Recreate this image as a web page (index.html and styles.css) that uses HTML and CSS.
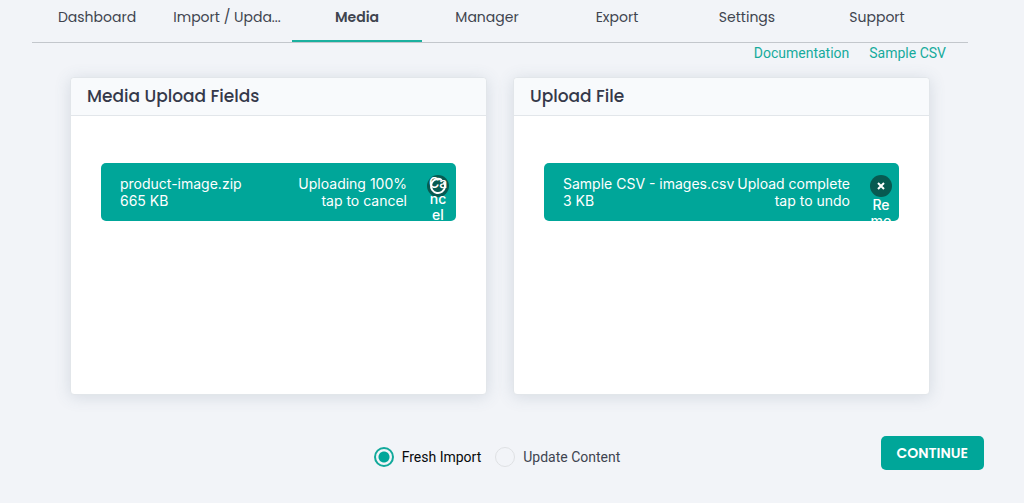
FILE: index.html
```html
<!DOCTYPE html>
<html lang="en">
<head>
<meta charset="utf-8">
<meta name="viewport" content="width=device-width, initial-scale=1">
<title>Media Upload</title>
<link rel="stylesheet" href="styles.css">
</head>
<body>
<nav class="tabs">
  <a class="tab" href="#dashboard">Dashboard</a>
  <a class="tab" href="#import">Import / Upda...</a>
  <a class="tab tab-active" href="#media" aria-current="page">Media</a>
  <a class="tab" href="#manager">Manager</a>
  <a class="tab" href="#export">Export</a>
  <a class="tab" href="#settings">Settings</a>
  <a class="tab" href="#support">Support</a>
</nav>
<div class="links">
  <a class="link" href="#docs">Documentation</a>
  <a class="link" href="#sample">Sample CSV</a>
</div>
<main class="cards">
  <section class="card">
    <h2 class="card-title">Media Upload Fields</h2>
    <div class="card-body">
      <div class="file">
        <div class="file-info"><span>product-image.zip</span><span>665 KB</span></div>
        <div class="file-status"><span>Uploading 100%</span><span>tap to cancel</span></div>
        <button class="file-action" type="button" aria-label="Cancel">
          <svg class="action-icon" viewBox="0 0 22 22" aria-hidden="true"><circle cx="11" cy="11" r="7" fill="none" stroke="#fff" stroke-width="2" stroke-dasharray="41 3" transform="rotate(-35 11 11)"/></svg>
          <span class="action-label action-label-over">Ca<br>nc<br>el</span>
        </button>
      </div>
    </div>
  </section>
  <section class="card">
    <h2 class="card-title">Upload File</h2>
    <div class="card-body">
      <div class="file">
        <div class="file-info"><span>Sample CSV - images.csv</span><span>3 KB</span></div>
        <div class="file-status"><span>Upload complete</span><span>tap to undo</span></div>
        <button class="file-action" type="button" aria-label="Remove">
          <svg class="action-icon" viewBox="0 0 22 22" aria-hidden="true"><path d="M8 8l6 6M14 8l-6 6" fill="none" stroke="#fff" stroke-width="2"/></svg>
          <span class="action-label action-label-below">Re<br>mo</span>
        </button>
      </div>
    </div>
  </section>
</main>
<footer class="footer">
  <div class="options">
    <label class="option option-checked"><input class="radio" type="radio" name="mode" checked>Fresh Import</label>
    <label class="option"><input class="radio" type="radio" name="mode">Update Content</label>
  </div>
  <button class="continue" type="button">CONTINUE</button>
</footer>
</body>
</html>
```
FILE: styles.css
```css
* {
  box-sizing: border-box;
}

body {
  margin: 0;
  background: #f2f4f8;
  color: #35394a;
  font-family: Roboto, sans-serif;
  font-size: 14px;
}

.tabs {
  display: grid;
  grid-template-columns: repeat(7, 1fr);
  margin: 0 56px 0 32px;
  padding-right: 26px;
  border-bottom: 1px solid #c3c7cc;
}

.tab {
  padding: 7px 0 12px;
  border-bottom: 2px solid transparent;
  color: #40444f;
  font-family: Poppins, Inter, sans-serif;
  line-height: 21px;
  text-align: center;
  text-decoration: none;
  white-space: nowrap;
}

.tab-active {
  border-color: #1bb09f;
  font-weight: 600;
}

.links {
  display: flex;
  justify-content: flex-end;
  gap: 20px;
  padding: 2px 78px 0 0;
}

.link {
  color: #16ab9c;
  line-height: 16px;
  text-decoration: none;
}

.cards {
  display: grid;
  grid-template-columns: 1fr 1fr;
  gap: 26px;
  padding: 16px 94px 0 70px;
}

.card {
  border: 1px solid #e2e6ea;
  border-radius: 4px;
  background: #fff;
  box-shadow: 0 2px 16px rgba(70, 95, 120, 0.17);
}

.card-title {
  margin: 0;
  padding: 6px 16px;
  border-bottom: 1px solid #e2e6ea;
  border-radius: 4px 4px 0 0;
  background: #f8fafc;
  font-family: Poppins, Inter, sans-serif;
  font-size: 17px;
  font-weight: 500;
  line-height: 25px;
}

.card-body {
  min-height: 278px;
  padding: 47px 30px;
}

.file {
  display: flex;
  align-items: flex-start;
  padding: 12px 7px 12px 19px;
  overflow: hidden;
  border-radius: 5px;
  background: #00a699;
  color: #fff;
  font-family: Inter, sans-serif;
  line-height: 17px;
  white-space: nowrap;
}

.file-info,
.file-status {
  display: flex;
  flex-direction: column;
}

.file-status {
  margin-left: auto;
  text-align: right;
}

.file-action {
  position: relative;
  width: 22px;
  height: 22px;
  margin-left: 20px;
  padding: 0;
  border: 0;
  border-radius: 50%;
  background: #075a51;
  color: #fff;
  font-family: Inter, sans-serif;
  font-size: 14px;
  line-height: 16px;
}

.action-icon {
  display: block;
  width: 22px;
  height: 22px;
}

.action-label {
  position: absolute;
  left: 0;
  width: 22px;
  font-weight: 500;
  text-align: center;
}

.action-label-over {
  top: 0;
}

.action-label-below {
  top: 22px;
}

.footer {
  display: grid;
  grid-template-columns: 1fr auto 1fr;
  align-items: center;
  padding: 41px 40px 32px 10px;
}

.options {
  display: flex;
  grid-column: 2;
  gap: 14px;
  padding-top: 8px;
}

.option {
  display: flex;
  align-items: center;
  gap: 8px;
  color: #404450;
}

.option-checked {
  color: #080a0c;
}

.radio {
  width: 20px;
  height: 20px;
  margin: 0;
  appearance: none;
  border: 1px solid #dfe1e4;
  border-radius: 50%;
}

.radio:checked {
  border: 2px solid #12a99b;
  background: radial-gradient(circle, #00a699 5px, #f2f4f8 6px);
}

.continue {
  justify-self: end;
  padding: 7px 16px;
  border: 0;
  border-radius: 5px;
  background: #00a699;
  color: #fff;
  font-family: Poppins, Inter, sans-serif;
  font-size: 14px;
  font-weight: 600;
  line-height: 20px;
}
```
